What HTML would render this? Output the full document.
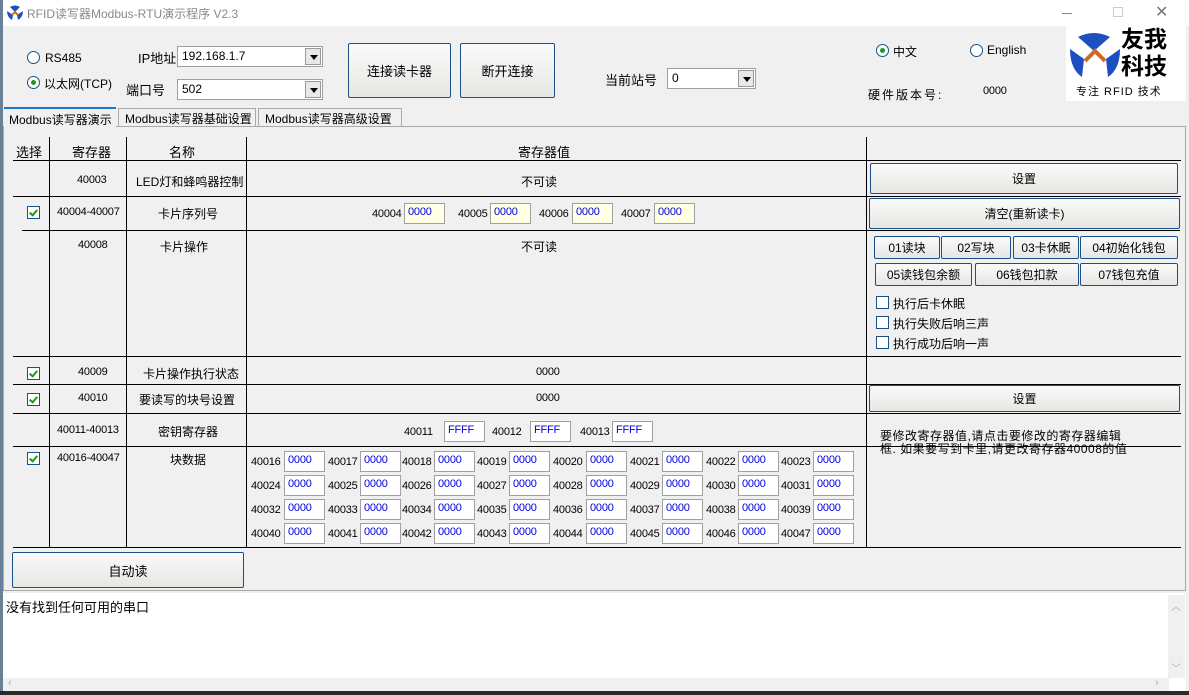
<!DOCTYPE html>
<html><head><meta charset="utf-8"><style>
*{margin:0;padding:0;box-sizing:border-box}
body{width:1189px;height:695px;overflow:hidden;background:#f0f0f0;font-family:"Liberation Sans","Noto Sans CJK SC",sans-serif;font-size:12px;color:#000;position:relative}
.a{position:absolute;white-space:nowrap}
.n{font-size:11px;letter-spacing:-0.2px}
.h{position:absolute;height:1px;background:#000}
.v{position:absolute;width:1px;background:#000}
.btn{position:absolute;border:1px solid #1c4f86;border-radius:2px;background:linear-gradient(#fafafa,#e6e6e3);display:flex;align-items:center;justify-content:center;font-size:12px}
.cb{position:absolute;width:13px;height:13px;border:1px solid #1c4f86;background:#fff}
.cb.k::after{content:"";position:absolute;left:3px;top:1px;width:3px;height:6px;border:solid #1a9a1a;border-width:0 2px 2px 0;transform:rotate(40deg)}
.box{position:absolute;height:21px;border:1px solid #a0a0a0;background:#fff;color:#0000e0;padding:2px 0 0 3px;font-size:11px;letter-spacing:-0.2px}
.y{background:#ffffe6}
.rad{position:absolute;width:13px;height:13px;border:1px solid #1c4f86;border-radius:50%;background:#fff}
.rad.on::after{content:"";position:absolute;left:3px;top:3px;width:5px;height:5px;border-radius:50%;background:#1a9a1a}
.cmb{position:absolute;height:21px;border:1px solid #a0a0a0;background:#fff;padding:2px 0 0 4px}
.cmb i{position:absolute;right:1px;top:1px;width:16px;height:17px;border:1px solid #999;background:#e8e8e8}
.cmb i::after{content:"";position:absolute;left:4px;top:6px;border:4px solid transparent;border-top:5px solid #000}
</style></head><body>
<div class="a" style="left:0;top:0;width:3px;height:695px;background:#6a7f98"></div>
<div class="a" style="left:3px;top:0;width:1186px;height:26px;background:#fff"></div>
<svg class="a" style="left:6px;top:5px" width="18" height="16" viewBox="0 0 18 16"><path d="M4 2 Q9 -1 14 2 L9 7Z" fill="#1e4fc0"/><path d="M1 6 L7 10 L6 15 Q1 12 1 6Z" fill="#1e4fc0"/><path d="M17 6 L11 10 L12 15 Q17 12 17 6Z" fill="#1e4fc0"/><path d="M6 10 L9 7 L12 10" stroke="#d06a20" stroke-width="2" fill="none"/></svg>
<div class="a" style="left:27px;top:5px;color:#888;font-size:12px">RFID读写器Modbus-RTU演示程序 V2.3</div>
<div class="a" style="left:1062px;top:13px;width:10px;height:1px;background:#888"></div>
<div class="a" style="left:1113px;top:7px;width:10px;height:10px;border:1px solid #ccc"></div>
<div class="a" style="left:1155px;top:2px;color:#777;font-size:16px">✕</div>

<div class="rad" style="left:27px;top:51px"></div><div class="a" style="left:45px;top:51px">RS485</div>
<div class="rad on" style="left:27px;top:76px"></div><div class="a" style="left:44px;top:75px">以太网(TCP)</div>
<div class="a" style="left:138px;top:48px;font-size:13px">IP地址</div>
<div class="cmb" style="left:177px;top:46px;width:146px;">192.168.1.7<i></i></div>
<div class="a" style="left:126px;top:80px;font-size:13px">端口号</div>
<div class="cmb" style="left:177px;top:79px;width:146px;">502<i></i></div>
<div class="btn" style="left:348px;top:43px;width:103px;height:55px;font-size:13px">连接读卡器</div>
<div class="btn" style="left:460px;top:43px;width:95px;height:55px;font-size:13px">断开连接</div>
<div class="a" style="left:605px;top:70px;font-size:13px">当前站号</div>
<div class="cmb" style="left:667px;top:68px;width:89px;">0<i></i></div>
<div class="rad on" style="left:876px;top:44px"></div><div class="a" style="left:893px;top:43px">中文</div>
<div class="rad" style="left:970px;top:44px"></div><div class="a" style="left:987px;top:43px">English</div>
<div class="a" style="left:868px;top:86px;letter-spacing:2px">硬件版本号:</div>
<div class="a n" style="left:983px;top:85px">0000</div>
<div class="a" style="left:1066px;top:26px;width:120px;height:75px;background:#fff"></div>
<svg class="a" style="left:1068px;top:31px" width="54" height="48" viewBox="0 0 54 48"><path d="M10 6 Q26 -2 42 6 L26 20Z" fill="#1e4fc0"/><path d="M2 18 L16 28 L14 46 Q2 38 2 18Z" fill="#1e4fc0"/><path d="M52 18 L38 28 L40 46 Q52 38 52 18Z" fill="#1e4fc0"/><path d="M17 30 L27 20 L37 30" stroke="#d06a20" stroke-width="4" fill="none"/></svg>
<div class="a" style="left:1121px;top:26px;font-size:23px;font-weight:bold;line-height:27px">友我<br>科技</div>
<div class="a" style="left:1076px;top:83px;font-size:11px;letter-spacing:1px">专注 RFID 技术</div>

<div class="a" style="left:3px;top:126px;width:1183px;height:465px;border:1px solid #a9a9a9"></div>
<div class="a" style="left:4px;top:107px;width:112px;height:20px;background:#f0f0f0;border-top:2px solid #1979ca"></div>
<div class="a" style="left:9px;top:111px">Modbus读写器演示</div>
<div class="a" style="left:118px;top:108px;width:138px;height:18px;border:1px solid #a9a9a9;border-bottom:none"></div>
<div class="a" style="left:125px;top:110px">Modbus读写器基础设置</div>
<div class="a" style="left:258px;top:108px;width:144px;height:18px;border:1px solid #a9a9a9;border-bottom:none"></div>
<div class="a" style="left:265px;top:110px">Modbus读写器高级设置</div>

<div class="h" style="left:13px;top:160px;width:1168px"></div>
<div class="h" style="left:13px;top:196px;width:1168px"></div>
<div class="h" style="left:22px;top:230px;width:1158px"></div>
<div class="h" style="left:13px;top:356px;width:1168px"></div>
<div class="h" style="left:13px;top:384px;width:1168px"></div>
<div class="h" style="left:13px;top:413px;width:1168px"></div>
<div class="h" style="left:13px;top:446px;width:1168px"></div>
<div class="h" style="left:13px;top:547px;width:1168px"></div>
<div class="v" style="left:49px;top:137px;height:411px"></div>
<div class="v" style="left:126px;top:137px;height:411px"></div>
<div class="v" style="left:246px;top:137px;height:411px"></div>
<div class="v" style="left:866px;top:137px;height:411px"></div>

<div class="a" style="left:16px;top:142px;font-size:13px">选择</div>
<div class="a" style="left:72px;top:142px;font-size:13px">寄存器</div>
<div class="a" style="left:169px;top:142px;font-size:13px">名称</div>
<div class="a" style="left:518px;top:142px;font-size:13px">寄存器值</div>

<div class="a n" style="left:77px;top:174px">40003</div>
<div class="a" style="left:136px;top:173px">LED灯和蜂鸣器控制</div>
<div class="a" style="left:521px;top:173px">不可读</div>
<div class="btn" style="left:870px;top:163px;width:308px;height:31px">设置</div>

<div class="cb k" style="left:27px;top:206px"></div>
<div class="a n" style="left:57px;top:206px">40004-40007</div>
<div class="a" style="left:158px;top:205px">卡片序列号</div>
<div class="a n" style="left:372px;top:208px">40004</div><div class="box y" style="left:404px;top:203px;width:41px">0000</div>
<div class="a n" style="left:458px;top:208px">40005</div><div class="box y" style="left:490px;top:203px;width:41px">0000</div>
<div class="a n" style="left:539px;top:208px">40006</div><div class="box y" style="left:572px;top:203px;width:41px">0000</div>
<div class="a n" style="left:621px;top:208px">40007</div><div class="box y" style="left:654px;top:203px;width:41px">0000</div>
<div class="btn" style="left:869px;top:198px;width:311px;height:31px">清空(重新读卡)</div>

<div class="a n" style="left:78px;top:239px">40008</div>
<div class="a" style="left:160px;top:238px">卡片操作</div>
<div class="a" style="left:521px;top:238px">不可读</div>
<div class="btn" style="left:874px;top:236px;width:66px;height:23px">01读块</div>
<div class="btn" style="left:941px;top:236px;width:70px;height:23px">02写块</div>
<div class="btn" style="left:1013px;top:236px;width:66px;height:23px">03卡休眠</div>
<div class="btn" style="left:1080px;top:236px;width:98px;height:23px">04初始化钱包</div>
<div class="btn" style="left:875px;top:263px;width:97px;height:23px">05读钱包余额</div>
<div class="btn" style="left:975px;top:263px;width:104px;height:23px">06钱包扣款</div>
<div class="btn" style="left:1080px;top:263px;width:98px;height:23px">07钱包充值</div>
<div class="cb" style="left:876px;top:296px"></div><div class="a" style="left:893px;top:295px">执行后卡休眠</div>
<div class="cb" style="left:876px;top:316px"></div><div class="a" style="left:893px;top:315px">执行失败后响三声</div>
<div class="cb" style="left:876px;top:336px"></div><div class="a" style="left:893px;top:335px">执行成功后响一声</div>

<div class="cb k" style="left:27px;top:367px"></div>
<div class="a n" style="left:78px;top:366px">40009</div>
<div class="a" style="left:143px;top:365px">卡片操作执行状态</div>
<div class="a n" style="left:536px;top:366px">0000</div>

<div class="cb k" style="left:27px;top:393px"></div>
<div class="a n" style="left:78px;top:392px">40010</div>
<div class="a" style="left:139px;top:391px">要读写的块号设置</div>
<div class="a n" style="left:536px;top:392px">0000</div>
<div class="btn" style="left:869px;top:385px;width:311px;height:27px">设置</div>

<div class="a n" style="left:57px;top:424px">40011-40013</div>
<div class="a" style="left:158px;top:423px">密钥寄存器</div>
<div class="a n" style="left:404px;top:426px">40011</div><div class="box" style="left:444px;top:421px;width:41px">FFFF</div>
<div class="a n" style="left:492px;top:426px">40012</div><div class="box" style="left:530px;top:421px;width:41px">FFFF</div>
<div class="a n" style="left:580px;top:426px">40013</div><div class="box" style="left:612px;top:421px;width:41px">FFFF</div>
<div class="a" style="left:880px;top:430px;line-height:13px;letter-spacing:0.5px">要修改寄存器值,请点击要修改的寄存器编辑<br>框. 如果要写到卡里,请更改寄存器40008的值</div>

<div class="cb k" style="left:27px;top:452px"></div>
<div class="a n" style="left:57px;top:452px">40016-40047</div>
<div class="a" style="left:170px;top:451px">块数据</div>

<div class="a n" style="left:251px;top:456px">40016</div><div class="box" style="left:284px;top:451px;width:41px">0000</div>
<div class="a n" style="left:328px;top:456px">40017</div><div class="box" style="left:360px;top:451px;width:41px">0000</div>
<div class="a n" style="left:402px;top:456px">40018</div><div class="box" style="left:434px;top:451px;width:41px">0000</div>
<div class="a n" style="left:477px;top:456px">40019</div><div class="box" style="left:509px;top:451px;width:41px">0000</div>
<div class="a n" style="left:553px;top:456px">40020</div><div class="box" style="left:586px;top:451px;width:41px">0000</div>
<div class="a n" style="left:630px;top:456px">40021</div><div class="box" style="left:662px;top:451px;width:41px">0000</div>
<div class="a n" style="left:706px;top:456px">40022</div><div class="box" style="left:738px;top:451px;width:41px">0000</div>
<div class="a n" style="left:781px;top:456px">40023</div><div class="box" style="left:813px;top:451px;width:41px">0000</div>

<div class="a n" style="left:251px;top:480px">40024</div><div class="box" style="left:284px;top:475px;width:41px">0000</div>
<div class="a n" style="left:328px;top:480px">40025</div><div class="box" style="left:360px;top:475px;width:41px">0000</div>
<div class="a n" style="left:402px;top:480px">40026</div><div class="box" style="left:434px;top:475px;width:41px">0000</div>
<div class="a n" style="left:477px;top:480px">40027</div><div class="box" style="left:509px;top:475px;width:41px">0000</div>
<div class="a n" style="left:553px;top:480px">40028</div><div class="box" style="left:586px;top:475px;width:41px">0000</div>
<div class="a n" style="left:630px;top:480px">40029</div><div class="box" style="left:662px;top:475px;width:41px">0000</div>
<div class="a n" style="left:706px;top:480px">40030</div><div class="box" style="left:738px;top:475px;width:41px">0000</div>
<div class="a n" style="left:781px;top:480px">40031</div><div class="box" style="left:813px;top:475px;width:41px">0000</div>

<div class="a n" style="left:251px;top:504px">40032</div><div class="box" style="left:284px;top:499px;width:41px">0000</div>
<div class="a n" style="left:328px;top:504px">40033</div><div class="box" style="left:360px;top:499px;width:41px">0000</div>
<div class="a n" style="left:402px;top:504px">40034</div><div class="box" style="left:434px;top:499px;width:41px">0000</div>
<div class="a n" style="left:477px;top:504px">40035</div><div class="box" style="left:509px;top:499px;width:41px">0000</div>
<div class="a n" style="left:553px;top:504px">40036</div><div class="box" style="left:586px;top:499px;width:41px">0000</div>
<div class="a n" style="left:630px;top:504px">40037</div><div class="box" style="left:662px;top:499px;width:41px">0000</div>
<div class="a n" style="left:706px;top:504px">40038</div><div class="box" style="left:738px;top:499px;width:41px">0000</div>
<div class="a n" style="left:781px;top:504px">40039</div><div class="box" style="left:813px;top:499px;width:41px">0000</div>

<div class="a n" style="left:251px;top:528px">40040</div><div class="box" style="left:284px;top:523px;width:41px">0000</div>
<div class="a n" style="left:328px;top:528px">40041</div><div class="box" style="left:360px;top:523px;width:41px">0000</div>
<div class="a n" style="left:402px;top:528px">40042</div><div class="box" style="left:434px;top:523px;width:41px">0000</div>
<div class="a n" style="left:477px;top:528px">40043</div><div class="box" style="left:509px;top:523px;width:41px">0000</div>
<div class="a n" style="left:553px;top:528px">40044</div><div class="box" style="left:586px;top:523px;width:41px">0000</div>
<div class="a n" style="left:630px;top:528px">40045</div><div class="box" style="left:662px;top:523px;width:41px">0000</div>
<div class="a n" style="left:706px;top:528px">40046</div><div class="box" style="left:738px;top:523px;width:41px">0000</div>
<div class="a n" style="left:781px;top:528px">40047</div><div class="box" style="left:813px;top:523px;width:41px">0000</div>

<div class="btn" style="left:12px;top:552px;width:232px;height:36px;font-size:13px">自动读</div>

<div class="a" style="left:3px;top:593px;width:1183px;height:98px;background:#fff"></div>
<div class="a" style="left:6px;top:597px;font-size:13px">没有找到任何可用的串口</div>
<div class="a" style="left:1168px;top:595px;width:17px;height:83px;background:#f0f0f0"></div>
<div class="a" style="left:1171px;top:598px;color:#aaa;font-size:10px">︿</div>
<div class="a" style="left:1171px;top:660px;color:#aaa;font-size:10px">﹀</div>
<div class="a" style="left:3px;top:678px;width:1166px;height:13px;background:#f0f0f0"></div>
<div class="a" style="left:8px;top:677px;color:#aaa;font-size:11px">‹</div>
<div class="a" style="left:1155px;top:677px;color:#aaa;font-size:11px">›</div>
<div class="a" style="left:0;top:691px;width:1189px;height:4px;background:#2a2a2a"></div>
</body></html>
